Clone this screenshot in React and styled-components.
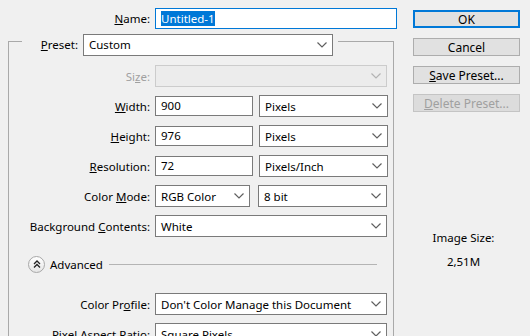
import React from "react";
import styled, { createGlobalStyle } from "styled-components";

const Global = createGlobalStyle`
	html, body {
		margin: 0;
		background: #f0f0f0;
		overflow: hidden;
	}
	body {
		width: 530px;
		height: 336px;
		font-family: "Noto Sans", "Open Sans", sans-serif;
		font-size: 11.5px;
		color: #000;
	}
`;

function Chevron() {
	return (
		<svg width="10" height="6" viewBox="0 0 10 6">
			<polyline points="0.5,0.5 5,5 9.5,0.5" fill="none" stroke="#606060" strokeWidth="1.2" />
		</svg>
	);
}

function Select({ value, width, disabled, spaced }) {
	return (
		<Drop $width={width} $disabled={disabled} $spaced={spaced}>
			<span>{value}</span>
			<Chevron />
		</Drop>
	);
}

function App() {
	return (
		<>
			<Global />
			<Dialog>
				<Left>
					<NameRow>
						<Label $width={150}>
							<u>N</u>ame:
						</Label>
						<NameInput>
							<Selected>Untitled-1</Selected>
						</NameInput>
					</NameRow>
					<Group>
						<GroupHead>
							<EdgeLeft />
							<Label $width={56}>
								<u>P</u>reset:
							</Label>
							<Select value="Custom" width={250} />
							<EdgeRight />
						</GroupHead>
						<GroupBody>
							<Row>
								<Label $width={141} $disabled>
									Si<u>z</u>e:
								</Label>
								<Select value="" width={232} disabled />
							</Row>
							<Row>
								<Label $width={141}>
									<u>W</u>idth:
								</Label>
								<Input>900</Input>
								<Select value="Pixels" width={129} />
							</Row>
							<Row>
								<Label $width={141}>
									<u>H</u>eight:
								</Label>
								<Input>976</Input>
								<Select value="Pixels" width={129} />
							</Row>
							<Row>
								<Label $width={141}>
									<u>R</u>esolution:
								</Label>
								<Input>72</Input>
								<Select value="Pixels/Inch" width={129} />
							</Row>
							<Row>
								<Label $width={141}>
									Color <u>M</u>ode:
								</Label>
								<Select value="RGB Color" width={95} />
								<Select value="8 bit" width={129} spaced />
							</Row>
							<Row>
								<Label $width={141}>
									Background <u>C</u>ontents:
								</Label>
								<Select value="White" width={232} />
							</Row>
							<Advanced>
								<Toggle>
									<svg width="8" height="8" viewBox="0 0 8 8">
										<polyline points="1,4 4,1 7,4" fill="none" stroke="#222" strokeWidth="1.3" />
										<polyline points="1,7.5 4,4.5 7,7.5" fill="none" stroke="#222" strokeWidth="1.3" />
									</svg>
								</Toggle>
								<span>Advanced</span>
								<Rule />
							</Advanced>
							<Row $first>
								<Label $width={141}>
									Color Pr<u>o</u>file:
								</Label>
								<Select value="Don't Color Manage this Document" width={232} />
							</Row>
							<Row>
								<Label $width={141}>
									Pi<u>x</u>el Aspect Ratio:
								</Label>
								<Select value="Square Pixels" width={232} />
							</Row>
						</GroupBody>
					</Group>
				</Left>
				<Right>
					<Button $primary>OK</Button>
					<Button>Cancel</Button>
					<Button>
						<u>S</u>ave Preset...
					</Button>
					<Button $disabled>
						<u>D</u>elete Preset...
					</Button>
					<SizeInfo>
						<div>Image Size:</div>
						<div>2,51M</div>
					</SizeInfo>
				</Right>
			</Dialog>
		</>
	);
}

const Dialog = styled.div`
	display: flex;
	align-items: flex-start;
	height: 336px;
	overflow: hidden;
`;

const Left = styled.div`
	width: 397px;
	display: flex;
	flex-direction: column;
`;

const NameRow = styled.div`
	display: flex;
	align-items: center;
	gap: 5px;
	margin-top: 8px;
	height: 21px;
`;

const Label = styled.label`
	width: ${(p) => p.$width}px;
	flex: none;
	text-align: right;
	white-space: nowrap;
	color: ${(p) => (p.$disabled ? "#a0a0a0" : "#000")};
`;

const NameInput = styled.div`
	box-sizing: border-box;
	width: 242px;
	height: 21px;
	border: 1px solid #0078d7;
	background: #fff;
	padding-left: 5px;
	display: flex;
	align-items: center;
`;

const Selected = styled.span`
	background: #0078d7;
	color: #fff;
	line-height: 15px;
`;

const Group = styled.div`
	margin-left: 8px;
	width: 386px;
	margin-top: 4px;
`;

const GroupHead = styled.div`
	display: flex;
	align-items: center;
	gap: 5px;
	height: 23px;
`;

const EdgeLeft = styled.div`
	align-self: stretch;
	box-sizing: border-box;
	width: 14px;
	margin-top: 8px;
	margin-right: -5px;
	border-top: 1px solid #a9a9a9;
	border-left: 1px solid #a9a9a9;
`;

const EdgeRight = styled.div`
	align-self: stretch;
	flex: 1;
	margin-top: 8px;
	border-top: 1px solid #a9a9a9;
	border-right: 1px solid #a9a9a9;
`;

const GroupBody = styled.div`
	border-left: 1px solid #a9a9a9;
	border-right: 1px solid #a9a9a9;
	padding-top: 9px;
	height: 300px;
	display: flex;
	flex-direction: column;
	gap: 8px;
`;

const Row = styled.div`
	display: flex;
	align-items: center;
	gap: 5px;
	height: 22px;
	margin-top: ${(p) => (p.$first ? "11px" : "0")};
`;

const Input = styled.div`
	box-sizing: border-box;
	width: 98px;
	height: 20px;
	margin-right: 1px;
	border: 1px solid #7a7a7a;
	background: #fff;
	padding-left: 5px;
	line-height: 18px;
`;

const Drop = styled.div`
	box-sizing: border-box;
	width: ${(p) => p.$width}px;
	height: 22px;
	flex: none;
	display: flex;
	align-items: center;
	justify-content: space-between;
	padding: 0 5px 0 5px;
	margin-left: ${(p) => (p.$spaced ? "3px" : "0")};
	border: 1px solid ${(p) => (p.$disabled ? "#cccccc" : "#7a7a7a")};
	background: ${(p) => (p.$disabled ? "#ececec" : "#fff")};
	white-space: nowrap;
	svg {
		opacity: ${(p) => (p.$disabled ? 0.4 : 1)};
	}
`;

const Advanced = styled.div`
	display: flex;
	align-items: center;
	gap: 5px;
	height: 20px;
	margin-top: 9px;
	padding-left: 19px;
`;

const Toggle = styled.div`
	box-sizing: border-box;
	width: 17px;
	height: 17px;
	border-radius: 50%;
	border: 1px solid #a8a8a8;
	background: linear-gradient(#ffffff, #e6e6e6);
	display: flex;
	align-items: center;
	justify-content: center;
`;

const Rule = styled.div`
	flex: 1;
	margin-left: 1px;
	margin-right: 16px;
	border-top: 1px solid #b4b4b4;
`;

const Right = styled.div`
	margin-left: 16px;
	margin-top: 10px;
	width: 107px;
	display: flex;
	flex-direction: column;
	gap: 10px;
`;

const Button = styled.div`
	box-sizing: border-box;
	height: 18px;
	display: flex;
	align-items: center;
	justify-content: center;
	font-size: 12px;
	background: #e1e1e1;
	border: ${(p) => (p.$primary ? "2px solid #0078d7" : "1px solid #adadad")};
	color: ${(p) => (p.$disabled ? "#a0a0a0" : "#000")};
	${(p) => p.$disabled && "background: #dcdcdc; border-color: #c4c4c4;"}
`;

const SizeInfo = styled.div`
	margin-top: 108px;
	display: flex;
	flex-direction: column;
	align-items: center;
	gap: 8px;
	line-height: 16px;
	padding-right: 6px;
`;

export default App;
